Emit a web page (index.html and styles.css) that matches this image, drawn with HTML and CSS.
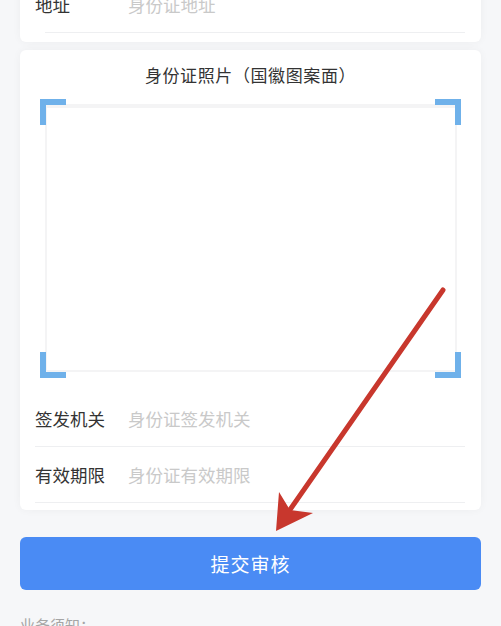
FILE: index.html
```html
<!DOCTYPE html>
<html lang=zh><head>
<meta charset=UTF-8>
<meta name=viewport content="width=device-width,initial-scale=1">
<title>身份证信息</title><link rel="stylesheet" href="styles.css"></head><body>
<div class=page>
<div class="card card-top">
<div class=row><span class=label>地址</span><span class=ph>身份证地址</span></div>
</div>
<div class="card card-photo">
<div class=title>身份证照片（国徽图案面）</div>
<div class=frame>
<i class="corner tl"></i><i class="corner tr"></i><i class="corner bl"></i><i class="corner br"></i>
<div class=frame-inner></div>
</div>
<div class=row><span class=label>签发机关</span><span class=ph>身份证签发机关</span></div>
<div class=row><span class=label>有效期限</span><span class=ph>身份证有效期限</span></div>
</div>
<button class=submit>提交审核</button>
<div class=notice>业务须知：</div>
</div>
<svg class=arrow width=501 height=626 viewBox="0 0 501 626">
<line x1=443 y1=290 x2=287 y2=514 stroke="#c8372d" stroke-width=5 stroke-linecap=round />
<polygon points="276,531 279,492 290,510 313,513" fill="#c8372d" />
</svg>
</body></html>
```
FILE: styles.css
```css
body{margin:0;background:#f6f7f9;font-family:"Noto Sans CJK SC","Noto Sans",sans-serif;overflow:hidden;height:626px;position:relative}
.page{padding:0 20px;margin-top:-23px}
.card{background:#fff;border-radius:6px;box-shadow:0 0 8px rgba(0,0,0,.045)}
.card-top{padding-bottom:9px}
.card-photo{margin-top:8px;padding:13px 0 7px}
.row{display:flex;align-items:center;height:55px;margin:0 16px 0 15px;border-bottom:1px solid #eeeff1;font-size:17.5px}
.card-top .row{margin-left:25px}
.card-top .row .label{margin-left:-10px}
.label{width:93px;color:#333}
.ph{color:#c9c9c9}
.title{text-align:center;font-size:17px;color:#333;line-height:24px;margin-bottom:12px;letter-spacing:.6px}
.frame{position:relative;margin:0 20px;height:279px;padding:5px 4px 6px 5px;box-sizing:border-box}
.frame-inner{height:100%;border:2px solid #f4f4f5;border-top-width:4px;border-radius:2px;box-sizing:border-box}
.corner{position:absolute;width:20px;height:20px;border:0 solid #6fb1ea}
.tl{left:0;top:0;border-left-width:6px;border-top-width:6px}
.tr{right:0;top:0;border-right-width:6px;border-top-width:6px}
.bl{left:0;bottom:0;border-left-width:6px;border-bottom-width:6px}
.br{right:0;bottom:0;border-right-width:6px;border-bottom-width:6px}
.card-photo .frame+.row{margin-top:13px}
.submit{display:block;width:100%;height:53px;margin-top:27px;border:none;border-radius:6px;background:#4a8bf4;color:#fff;font-family:inherit;font-size:19px;letter-spacing:1px}
.notice{margin-top:24px;color:#a5a5a5;font-size:15px}
.arrow{position:absolute;left:0;top:0;pointer-events:none}
```
